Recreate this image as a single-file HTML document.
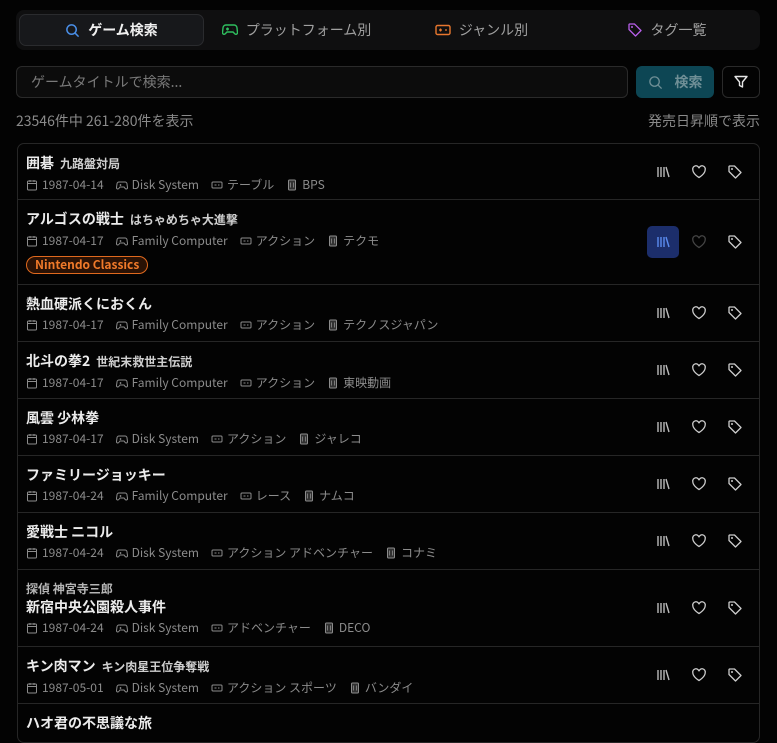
<!DOCTYPE html>
<html><head><meta charset="utf-8"><style>
*{box-sizing:border-box;margin:0;padding:0}
body{width:777px;height:726px;overflow:hidden;background:#030303;font-family:"Noto Sans CJK JP","Liberation Sans",sans-serif;color:#e6e6e6;position:relative}
.tabs{position:absolute;left:16px;top:10px;width:744px;height:40px;background:#0f0f10;border-radius:8px}
.tab{position:absolute;top:4px;height:32px;display:flex;align-items:center;justify-content:center;font-size:14px;color:#a0a0a0;gap:8px}
.tab.active{background:#17181b;border:1px solid #2a2b2e;border-radius:7px;color:#f0f0f0;font-weight:bold}
.input{position:absolute;left:16px;top:66px;width:612px;height:32px;border:1px solid #2a2a2a;border-radius:6px;background:#0c0c0c;font-size:14px;color:#7a7a7a;padding:0 14px;line-height:30px}
.sbtn{position:absolute;left:636px;top:66px;width:78px;height:32px;background:#0d4654;border-radius:6px;display:flex;align-items:center;justify-content:center;gap:12px;color:#6f8f96;font-weight:bold;font-size:14px}
.fbtn{position:absolute;left:722px;top:66px;width:38px;height:32px;border:1px solid #2a2a2a;border-radius:6px;display:flex;align-items:center;justify-content:center}
.count{position:absolute;left:16px;top:110px;font-size:14px;color:#8a8a8a;line-height:22px}
.sort{position:absolute;right:17px;top:110px;font-size:14px;color:#8a8a8a;line-height:22px}
.list{position:absolute;left:17px;top:143px;width:743px;height:600px;border:1px solid #262626;border-radius:7px;overflow:hidden}
.row{position:absolute;left:0;width:100%;border-bottom:1px solid #262626;padding:9px 8px 0}
.t{font-size:14px;font-weight:bold;line-height:20px;color:#ececec}
.t small{font-size:12px;margin-left:6px;color:#cfcfcf}
.pre{font-size:12px;font-weight:bold;color:#b5b5b5;line-height:16px;margin-top:3px}
.m{font-size:12px;color:#8c8c8c;line-height:18px;margin-top:2px;display:flex;align-items:center;white-space:nowrap}
.m svg{margin-right:4px}
.m span{margin-right:12px;display:flex;align-items:center}
.tag{display:inline-block;margin-top:6px;border:1px solid #e0691e;color:#f07a2a;background:#2a1205;border-radius:10px;font-size:12px;font-weight:bold;line-height:16px;padding:0 8px}
.acts{position:absolute;right:4px;top:0;bottom:0;display:flex;align-items:center}
.ic{width:32px;height:32px;display:flex;align-items:center;justify-content:center;margin-right:4px}
.ic.on{background:#1c2e6b;border-radius:5px}
</style></head><body>
<svg width="0" height="0" style="position:absolute"><defs>
<symbol id="cal" viewBox="0 0 12 12"><rect x="1.5" y="2" width="9" height="9" rx="1" fill="none" stroke="#8c8c8c"/><path d="M1.5 4.5h9M4 1v2M8 1v2" stroke="#8c8c8c"/></symbol>
<symbol id="pad" viewBox="0 0 12 12"><path d="M3 3h6a2 2 0 0 1 2 2l0.5 3.5a1.3 1.3 0 0 1-2.3 1L8 8H4l-1.2 1.5a1.3 1.3 0 0 1-2.3-1L1 5a2 2 0 0 1 2-2z" fill="none" stroke="#8c8c8c"/><path d="M3.5 6h2M4.5 5v2" stroke="#8c8c8c" stroke-width=".8"/></symbol>
<symbol id="gen" viewBox="0 0 12 12"><rect x="1" y="3" width="10" height="6" rx="1" fill="none" stroke="#8c8c8c"/><path d="M3.5 6h2M7 6h1.5" stroke="#8c8c8c"/></symbol>
<symbol id="bld" viewBox="0 0 12 12"><rect x="2.5" y="1" width="7" height="10" rx="1" fill="#8c8c8c" fill-opacity=".35" stroke="#8c8c8c"/><path d="M4.5 3.5v5M7.5 3.5v5" stroke="#8c8c8c" stroke-width=".8"/></symbol>
<symbol id="lib" viewBox="0 0 16 16"><path d="M3 3v10M6 3v10M9 3v10M11 3l3 10" stroke="currentColor" stroke-width="1.4" fill="none"/></symbol>
<symbol id="heart" viewBox="0 0 16 16"><path d="M8 13.5S1.8 10 1.8 5.6A3.1 3.1 0 0 1 8 4.3a3.1 3.1 0 0 1 6.2 1.3C14.2 10 8 13.5 8 13.5z" fill="none" stroke="currentColor" stroke-width="1.3"/></symbol>
<symbol id="tagi" viewBox="0 0 16 16"><path d="M2 2.5v5l6.5 6.5 5.5-5.5L7.5 2H2.5z" fill="none" stroke="currentColor" stroke-width="1.3" stroke-linejoin="round"/><circle cx="5" cy="5" r="1" fill="currentColor"/></symbol>
</defs></svg>

<div class="tabs">
 <div class="tab active" style="left:3px;width:185px"><svg width="15" height="15" viewBox="0 0 16 16"><circle cx="7" cy="7" r="5" fill="none" stroke="#4a8fe8" stroke-width="1.6"/><path d="M11 11l3.5 3.5" stroke="#4a8fe8" stroke-width="1.6"/></svg>ゲーム検索</div>
 <div class="tab" style="left:188px;width:185px"><svg width="16" height="14" viewBox="0 0 16 14"><path d="M4 2h8a3 3 0 0 1 3 3l.5 4.5a1.6 1.6 0 0 1-2.9 1.1L11 9H5l-1.6 1.6A1.6 1.6 0 0 1 .5 9.5L1 5a3 3 0 0 1 3-3z" fill="none" stroke="#2fbf5f" stroke-width="1.4"/><path d="M4 6h3M5.5 4.5v3M10 5.5h.1M11.5 7h.1" stroke="#2fbf5f" stroke-width="1.4"/></svg>プラットフォーム別</div>
 <div class="tab" style="left:373px;width:185px"><svg width="16" height="12" viewBox="0 0 16 12"><rect x="1" y="1.5" width="14" height="9" rx="1.5" fill="none" stroke="#e8772e" stroke-width="1.4"/><path d="M4 6h3M5.5 4.5v3M10 6h2" stroke="#e8772e" stroke-width="1.3"/></svg>ジャンル別</div>
 <div class="tab" style="left:558px;width:185px"><svg width="16" height="16" viewBox="0 0 16 16" style="color:#b65ee8"><use href="#tagi"/></svg>タグ一覧</div>
</div>
<div class="input">ゲームタイトルで検索...</div>
<div class="sbtn"><svg width="15" height="15" viewBox="0 0 16 16"><circle cx="7" cy="7" r="5" fill="none" stroke="#6f8f96" stroke-width="1.4"/><path d="M11 11l3.5 3.5" stroke="#6f8f96" stroke-width="1.4"/></svg>検索</div>
<div class="fbtn"><svg width="16" height="16" viewBox="0 0 16 16"><path d="M2 2.5h12L9.5 8v5l-3-1.5V8z" fill="none" stroke="#e6e6e6" stroke-width="1.4" stroke-linejoin="round"/></svg></div>
<div class="count">23546件中 261-280件を表示</div>
<div class="sort">発売日昇順で表示</div>

<div class="list">
<div class="row" style="top:0;height:56px"><div class="t">囲碁<small>九路盤対局</small></div><div class="m"><span><svg width="12" height="12"><use href="#cal"/></svg>1987-04-14</span><span><svg width="12" height="12"><use href="#pad"/></svg>Disk System</span><span><svg width="12" height="12"><use href="#gen"/></svg>テーブル</span><span><svg width="12" height="12"><use href="#bld"/></svg>BPS</span></div>
<div class="acts"><div class="ic" style="color:#bbb"><svg width="16" height="16"><use href="#lib"/></svg></div><div class="ic" style="color:#ccc"><svg width="16" height="16"><use href="#heart"/></svg></div><div class="ic" style="color:#ccc"><svg width="16" height="16"><use href="#tagi"/></svg></div></div></div>

<div class="row" style="top:56px;height:85px"><div class="t">アルゴスの戦士<small>はちゃめちゃ大進撃</small></div><div class="m"><span><svg width="12" height="12"><use href="#cal"/></svg>1987-04-17</span><span><svg width="12" height="12"><use href="#pad"/></svg>Family Computer</span><span><svg width="12" height="12"><use href="#gen"/></svg>アクション</span><span><svg width="12" height="12"><use href="#bld"/></svg>テクモ</span></div><div class="tag">Nintendo Classics</div>
<div class="acts"><div class="ic on" style="color:#5b8cf0"><svg width="16" height="16"><use href="#lib"/></svg></div><div class="ic" style="color:#444"><svg width="16" height="16"><use href="#heart"/></svg></div><div class="ic" style="color:#ccc"><svg width="16" height="16"><use href="#tagi"/></svg></div></div></div>

<div class="row" style="top:141px;height:57px"><div class="t">熱血硬派くにおくん</div><div class="m"><span><svg width="12" height="12"><use href="#cal"/></svg>1987-04-17</span><span><svg width="12" height="12"><use href="#pad"/></svg>Family Computer</span><span><svg width="12" height="12"><use href="#gen"/></svg>アクション</span><span><svg width="12" height="12"><use href="#bld"/></svg>テクノスジャパン</span></div>
<div class="acts"><div class="ic" style="color:#bbb"><svg width="16" height="16"><use href="#lib"/></svg></div><div class="ic" style="color:#ccc"><svg width="16" height="16"><use href="#heart"/></svg></div><div class="ic" style="color:#ccc"><svg width="16" height="16"><use href="#tagi"/></svg></div></div></div>

<div class="row" style="top:198px;height:57px"><div class="t">北斗の拳2<small>世紀末救世主伝説</small></div><div class="m"><span><svg width="12" height="12"><use href="#cal"/></svg>1987-04-17</span><span><svg width="12" height="12"><use href="#pad"/></svg>Family Computer</span><span><svg width="12" height="12"><use href="#gen"/></svg>アクション</span><span><svg width="12" height="12"><use href="#bld"/></svg>東映動画</span></div>
<div class="acts"><div class="ic" style="color:#bbb"><svg width="16" height="16"><use href="#lib"/></svg></div><div class="ic" style="color:#ccc"><svg width="16" height="16"><use href="#heart"/></svg></div><div class="ic" style="color:#ccc"><svg width="16" height="16"><use href="#tagi"/></svg></div></div></div>

<div class="row" style="top:255px;height:57px"><div class="t">風雲 少林拳</div><div class="m"><span><svg width="12" height="12"><use href="#cal"/></svg>1987-04-17</span><span><svg width="12" height="12"><use href="#pad"/></svg>Disk System</span><span><svg width="12" height="12"><use href="#gen"/></svg>アクション</span><span><svg width="12" height="12"><use href="#bld"/></svg>ジャレコ</span></div>
<div class="acts"><div class="ic" style="color:#bbb"><svg width="16" height="16"><use href="#lib"/></svg></div><div class="ic" style="color:#ccc"><svg width="16" height="16"><use href="#heart"/></svg></div><div class="ic" style="color:#ccc"><svg width="16" height="16"><use href="#tagi"/></svg></div></div></div>

<div class="row" style="top:312px;height:57px"><div class="t">ファミリージョッキー</div><div class="m"><span><svg width="12" height="12"><use href="#cal"/></svg>1987-04-24</span><span><svg width="12" height="12"><use href="#pad"/></svg>Family Computer</span><span><svg width="12" height="12"><use href="#gen"/></svg>レース</span><span><svg width="12" height="12"><use href="#bld"/></svg>ナムコ</span></div>
<div class="acts"><div class="ic" style="color:#bbb"><svg width="16" height="16"><use href="#lib"/></svg></div><div class="ic" style="color:#ccc"><svg width="16" height="16"><use href="#heart"/></svg></div><div class="ic" style="color:#ccc"><svg width="16" height="16"><use href="#tagi"/></svg></div></div></div>

<div class="row" style="top:369px;height:57px"><div class="t">愛戦士 ニコル</div><div class="m"><span><svg width="12" height="12"><use href="#cal"/></svg>1987-04-24</span><span><svg width="12" height="12"><use href="#pad"/></svg>Disk System</span><span><svg width="12" height="12"><use href="#gen"/></svg>アクション アドベンチャー</span><span><svg width="12" height="12"><use href="#bld"/></svg>コナミ</span></div>
<div class="acts"><div class="ic" style="color:#bbb"><svg width="16" height="16"><use href="#lib"/></svg></div><div class="ic" style="color:#ccc"><svg width="16" height="16"><use href="#heart"/></svg></div><div class="ic" style="color:#ccc"><svg width="16" height="16"><use href="#tagi"/></svg></div></div></div>

<div class="row" style="top:426px;height:77px;padding-top:8px"><div class="pre">探偵 神宮寺三郎</div><div class="t">新宿中央公園殺人事件</div><div class="m"><span><svg width="12" height="12"><use href="#cal"/></svg>1987-04-24</span><span><svg width="12" height="12"><use href="#pad"/></svg>Disk System</span><span><svg width="12" height="12"><use href="#gen"/></svg>アドベンチャー</span><span><svg width="12" height="12"><use href="#bld"/></svg>DECO</span></div>
<div class="acts"><div class="ic" style="color:#bbb"><svg width="16" height="16"><use href="#lib"/></svg></div><div class="ic" style="color:#ccc"><svg width="16" height="16"><use href="#heart"/></svg></div><div class="ic" style="color:#ccc"><svg width="16" height="16"><use href="#tagi"/></svg></div></div></div>

<div class="row" style="top:503px;height:57px"><div class="t">キン肉マン<small>キン肉星王位争奪戦</small></div><div class="m"><span><svg width="12" height="12"><use href="#cal"/></svg>1987-05-01</span><span><svg width="12" height="12"><use href="#pad"/></svg>Disk System</span><span><svg width="12" height="12"><use href="#gen"/></svg>アクション スポーツ</span><span><svg width="12" height="12"><use href="#bld"/></svg>バンダイ</span></div>
<div class="acts"><div class="ic" style="color:#bbb"><svg width="16" height="16"><use href="#lib"/></svg></div><div class="ic" style="color:#ccc"><svg width="16" height="16"><use href="#heart"/></svg></div><div class="ic" style="color:#ccc"><svg width="16" height="16"><use href="#tagi"/></svg></div></div></div>

<div class="row" style="top:560px;height:57px"><div class="t">ハオ君の不思議な旅</div></div>
</div>
</body></html>
